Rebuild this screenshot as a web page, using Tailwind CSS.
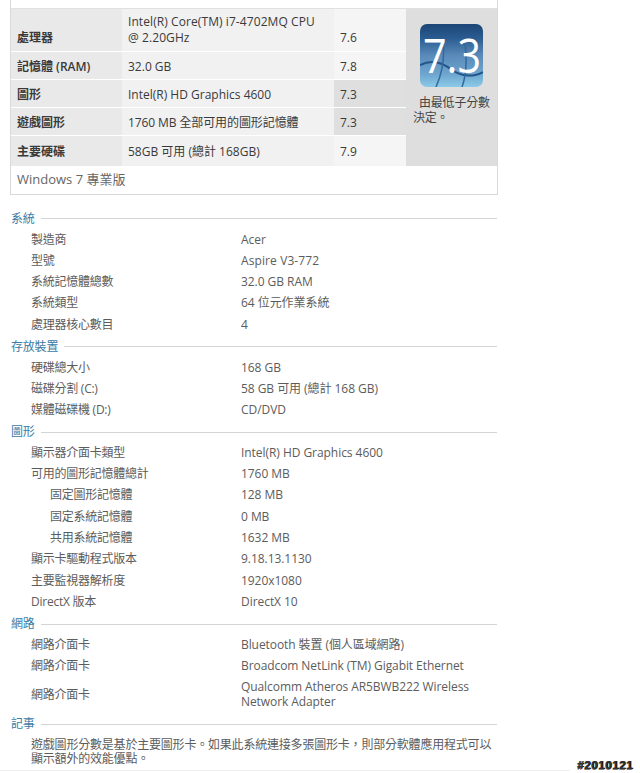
<!DOCTYPE html>
<html><head><meta charset="utf-8"><script src="https://cdn.jsdelivr.net/npm/@tailwindcss/browser@4"></script></head>
<body class="bg-white">
<div class="relative h-[773px] w-[640px] overflow-hidden font-['Open_Sans','Noto_Sans_CJK_TC',sans-serif] text-[12px] leading-[21.3px] text-[#5c5c5c]">
  <div class="ml-[10px] w-[488px] border border-t-0 border-[#d9d9d9]">
    <div class="h-[8px]"></div>
    <div class="grid grid-cols-[111px_212px_72px_91px] grid-rows-[43px_28px_28px_28px_30px] border-t border-[#e0e0e0] text-[#3a3a3a]">
      <div class="flex items-end border-b border-white bg-[#e9e9e9] pb-[3px] pl-[6px] font-semibold">處理器</div>
      <div class="whitespace-nowrap border-b border-white bg-[#f1f1f1] pl-[6px] pt-[5px] leading-[16px] tracking-[0.08px]">Intel(R) Core(TM) i7-4702MQ CPU<br>@ 2.20GHz</div>
      <div class="flex items-end border-b border-white bg-[#f5f5f5] pb-[3px] pl-[6px]">7.6</div>
      <div class="row-span-5 bg-[#dedede] pl-[7px] pt-[15px]">
        <svg class="ml-[7px] block" width="63" height="63" viewBox="0 0 63 63">
          <defs>
            <linearGradient id="g" x1="0" y1="0" x2="0" y2="1"><stop offset="0" stop-color="#1c4676"/><stop offset="0.22" stop-color="#2a5b90"/><stop offset="0.5" stop-color="#5a8aba"/><stop offset="0.8" stop-color="#6ea6cf"/><stop offset="1" stop-color="#8acbe8"/></linearGradient>
          </defs>
          <rect width="63" height="63" rx="7" fill="url(#g)"/>
          <path d="M0 41 C12 35 22 38 32 46 C42 53 54 53 63 48" fill="none" stroke="#22558a" stroke-width="2"/>
          <path d="M23 14 C25 32 22 50 16 63 M45 20 C47 36 46 52 42 63" fill="none" stroke="#33699c" stroke-width="1.5"/>
          <text x="3" y="49" fill="#fff" font-size="47" font-weight="400" textLength="58" lengthAdjust="spacingAndGlyphs" font-family="Open Sans, sans-serif">7.3</text>
        </svg>
        <div class="mt-[8px] whitespace-nowrap leading-[15px] tracking-[-0.2px] text-[#444]"><span class="ml-[6px]">由最低子分數</span><br>決定。</div>
      </div>
      <div class="flex items-center border-b border-white bg-[#e9e9e9] pl-[6px] pt-[2px] font-semibold">記憶體 (RAM)</div>
      <div class="flex items-center border-b border-white bg-[#f1f1f1] pl-[6px] pt-[2px]">32.0 GB</div>
      <div class="flex items-center border-b border-white bg-[#f5f5f5] pl-[6px] pt-[2px]">7.8</div>
      <div class="flex items-center border-b border-white bg-[#e9e9e9] pl-[6px] pt-[2px] font-semibold">圖形</div>
      <div class="flex items-center border-b border-white bg-[#f1f1f1] pl-[6px] pt-[2px]">Intel(R) HD Graphics 4600</div>
      <div class="flex items-center border-b border-white bg-[#dfdfdf] pl-[6px] pt-[2px]">7.3</div>
      <div class="flex items-center border-b border-white bg-[#e9e9e9] pl-[6px] pt-[2px] font-semibold">遊戲圖形</div>
      <div class="flex items-center border-b border-white bg-[#f1f1f1] pl-[6px] pt-[2px] tracking-[-0.1px]">1760 MB 全部可用的圖形記憶體</div>
      <div class="flex items-center border-b border-white bg-[#dfdfdf] pl-[6px] pt-[2px]">7.3</div>
      <div class="flex items-center bg-[#e9e9e9] pl-[6px] pt-[1px] font-semibold">主要硬碟</div>
      <div class="flex items-center bg-[#f1f1f1] pl-[6px] pt-[1px]">58GB 可用 (總計 168GB)</div>
      <div class="flex items-center bg-[#f5f5f5] pl-[6px] pt-[1px]">7.9</div>
    </div>
    <div class="flex h-[28px] items-center pl-[6px] text-[13px] text-[#666]">Windows 7 專業版</div>
  </div>

  <div class="ml-[11px] mt-[13px] w-[486px]">
    <div class="flex h-[21.5px] items-center gap-[6px] tracking-[-0.2px] text-[#3a7ca5]"><span>系統</span><span class="h-px flex-1 bg-[#d5d5d5]"></span></div>
    <div class="mb-[1px] -mt-[1px] grid grid-cols-[210px_1fr] pl-[20px] [&>div:nth-child(even)]:tracking-[-0.05px] [&>div:nth-child(odd)]:tracking-[-0.25px]">
      <div>製造商</div><div>Acer</div>
      <div>型號</div><div class="tracking-[0.1px]!">Aspire V3-772</div>
      <div>系統記憶體總數</div><div>32.0 GB RAM</div>
      <div>系統類型</div><div>64 位元作業系統</div>
      <div>處理器核心數目</div><div>4</div>
    </div>
    <div class="-mt-[0.5px] flex h-[21.5px] items-center gap-[6px] tracking-[-0.2px] text-[#3a7ca5]"><span>存放裝置</span><span class="h-px flex-1 bg-[#d5d5d5]"></span></div>
    <div class="-mt-[0.2px] mb-[0.7px] grid grid-cols-[210px_1fr] pl-[20px] [&>div:nth-child(even)]:tracking-[-0.05px] [&>div:nth-child(odd)]:tracking-[-0.25px]">
      <div>硬碟總大小</div><div>168 GB</div>
      <div>磁碟分割 (C:)</div><div>58 GB 可用 (總計 168 GB)</div>
      <div>媒體磁碟機 (D:)</div><div>CD/DVD</div>
    </div>
    <div class="flex h-[21.5px] items-center gap-[6px] tracking-[-0.2px] text-[#3a7ca5]"><span>圖形</span><span class="h-px flex-1 bg-[#d5d5d5]"></span></div>
    <div class="mb-[1px] -mt-[1px] grid grid-cols-[210px_1fr] pl-[20px] [&>div:nth-child(even)]:tracking-[-0.05px] [&>div:nth-child(odd)]:tracking-[-0.25px]">
      <div>顯示器介面卡類型</div><div>Intel(R) HD Graphics 4600</div>
      <div>可用的圖形記憶體總計</div><div>1760 MB</div>
      <div class="pl-[19px]">固定圖形記憶體</div><div>128 MB</div>
      <div class="pl-[19px]">固定系統記憶體</div><div>0 MB</div>
      <div class="pl-[19px]">共用系統記憶體</div><div>1632 MB</div>
      <div>顯示卡驅動程式版本</div><div>9.18.13.1130</div>
      <div>主要監視器解析度</div><div>1920x1080</div>
      <div>DirectX 版本</div><div>DirectX 10</div>
    </div>
    <div class="flex h-[21.5px] items-center gap-[6px] tracking-[-0.2px] text-[#3a7ca5]"><span>網路</span><span class="h-px flex-1 bg-[#d5d5d5]"></span></div>
    <div class="mb-[1px] -mt-[1px] grid grid-cols-[210px_1fr] pl-[20px] [&>div:nth-child(even)]:tracking-[-0.08px] [&>div:nth-child(odd)]:tracking-[-0.25px]">
      <div>網路介面卡</div><div>Bluetooth 裝置 (個人區域網路)</div>
      <div>網路介面卡</div><div>Broadcom NetLink (TM) Gigabit Ethernet</div>
      <div class="self-center">網路介面卡</div><div class="py-[3px] leading-[15px]">Qualcomm Atheros AR5BWB222 Wireless<br>Network Adapter</div>
    </div>
    <div class="flex h-[21.5px] items-center gap-[6px] tracking-[-0.2px] text-[#3a7ca5]"><span>記事</span><span class="h-px flex-1 bg-[#d5d5d5]"></span></div>
    <div class="whitespace-nowrap pl-[20px] pt-[3px] leading-[14.5px] tracking-[-0.2px]">遊戲圖形分數是基於主要圖形卡。如果此系統連接多張圖形卡，則部分軟體應用程式可以<br>顯示額外的效能優點。</div>
  </div>
  <div class="absolute bottom-[1px] right-[7px] font-['Liberation_Sans',sans-serif] text-[11.5px] font-bold leading-[14px] tracking-[0.6px] text-[#333] [text-shadow:1px_0_0_#111,0_1px_0_#777]">#2010121</div>
  <div class="absolute bottom-[2px] left-0 h-px w-[570px] bg-[#eee]"></div>
</div>
</body></html>
